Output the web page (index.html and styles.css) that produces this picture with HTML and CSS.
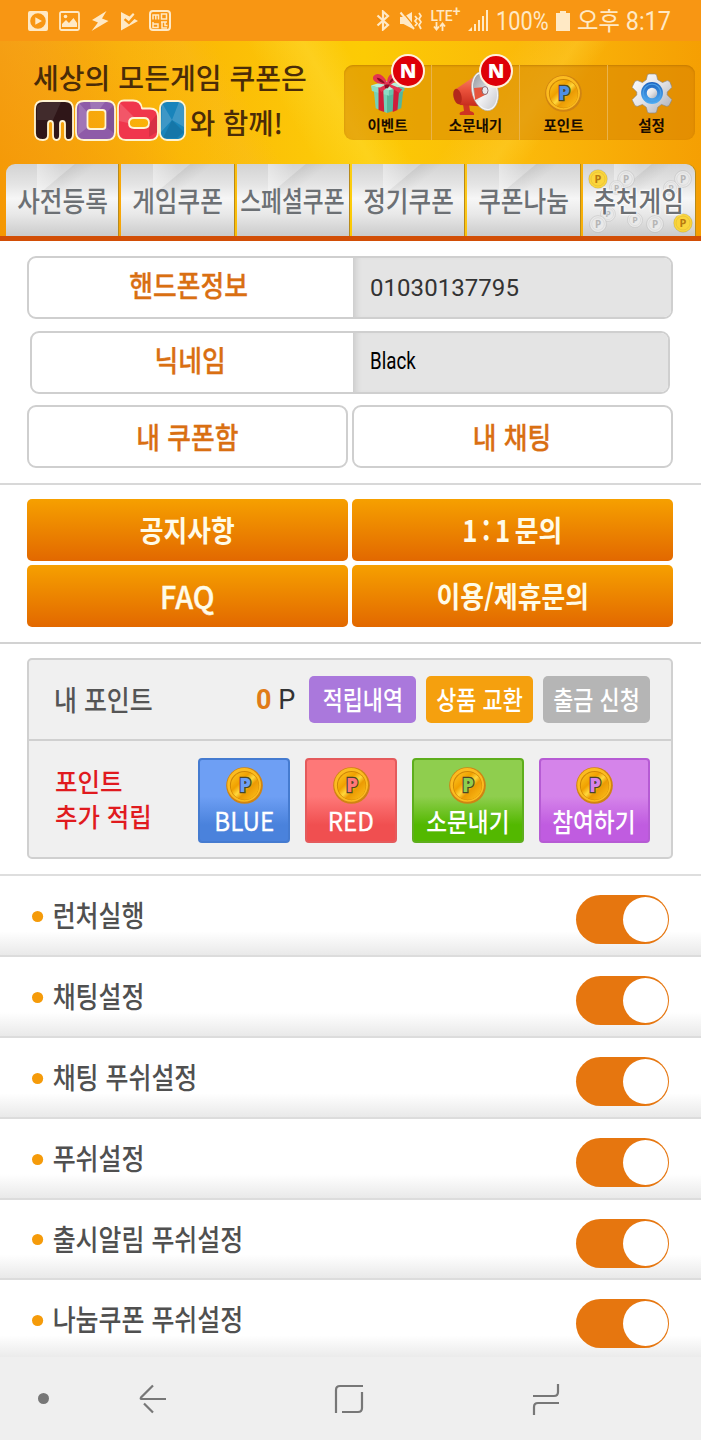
FILE: index.html
```html
<!DOCTYPE html>
<html lang="ko">
<head>
<meta charset="utf-8">
<title>mobi</title>
<link rel="stylesheet" href="styles.css">
</head>
<body>
<svg class="defs" width="0" height="0" aria-hidden="true">
  <defs>
    <linearGradient id="gold" x1="0" y1="0" x2="1" y2="1">
      <stop offset="0" stop-color="#ffcb25"/><stop offset=".35" stop-color="#f0a000"/><stop offset=".5" stop-color="#ffd83c"/><stop offset=".62" stop-color="#eb9a04"/><stop offset="1" stop-color="#ffc31b"/>
    </linearGradient>
    <linearGradient id="silver" x1="0" y1="0" x2="1" y2="1">
      <stop offset="0" stop-color="#fff"/><stop offset=".5" stop-color="#e3e3e6"/><stop offset="1" stop-color="#a9abb3"/>
    </linearGradient>
    <linearGradient id="bell" x1="0" y1="0" x2=".6" y2="1">
      <stop offset="0" stop-color="#8f9299"/><stop offset=".45" stop-color="#c4c6cb"/><stop offset=".6" stop-color="#f2f2f4"/><stop offset="1" stop-color="#d2d3d8"/>
    </linearGradient>
    <linearGradient id="blue" x1="0" y1="0" x2="0" y2="1">
      <stop offset="0" stop-color="#1c62c0"/><stop offset="1" stop-color="#51b0f5"/>
    </linearGradient>
    <linearGradient id="red" x1="0" y1="0" x2="0" y2="1">
      <stop offset="0" stop-color="#fb8a68"/><stop offset=".5" stop-color="#e9503a"/><stop offset="1" stop-color="#c42a1b"/>
    </linearGradient>
    <symbol id="coin" viewBox="0 0 40 40">
      <circle cx="20" cy="20" r="18.800" fill="#d08412"/>
      <circle cx="19.600" cy="19.400" r="17.300" fill="#fcbc20"/>
      <circle cx="20" cy="20" r="15" fill="#cf8606"/>
      <circle cx="20.300" cy="20.400" r="14.300" fill="url(#gold)"/>
      <text class="coin-letter" x="20.500" y="27" text-anchor="middle">P</text>
    </symbol>
    <symbol id="chip" viewBox="0 0 20 20">
      <circle cx="10" cy="10" r="9.300" fill="currentColor" stroke="#0002" stroke-width=".8"/>
      <circle cx="10" cy="10" r="7" fill="none" stroke="#0001"/>
      <text class="chip-letter" x="10" y="14" text-anchor="middle">P</text>
    </symbol>
  </defs>
</svg>

<div class="status">
  <div class="status-left">
    <svg width="20" height="20" viewBox="0 0 20 20"><path fill-rule="evenodd" fill="currentColor" d="M2 0h16a2 2 0 0 1 2 2v16a2 2 0 0 1-2 2H2a2 2 0 0 1-2-2V2a2 2 0 0 1 2-2zm8 2.200a7.800 7.800 0 1 0 0 15.600a7.800 7.800 0 0 0 0-15.600zM7.300 6.200 14 10l-6.700 3.800z"/></svg>
    <svg width="21" height="20" viewBox="0 0 21 20"><rect x="1" y="1" width="19" height="18" rx="1.500" fill="none" stroke="currentColor" stroke-width="1.800"/><path fill="currentColor" d="M3 16v-3l4-4 3 3 4.500-5L18 12v4z"/><circle cx="6.500" cy="5.500" r="1.800" fill="currentColor"/></svg>
    <svg width="18" height="20" viewBox="0 0 18 20"><path fill="currentColor" d="M15.500 0 1 9l6 2.500L.5 20 17.500 10 11 7.500z"/></svg>
    <svg width="18" height="20" viewBox="0 0 18 20"><path fill="currentColor" d="M1 1v18.500L18 10 14.500 8 9 13.500 3.800 9l1.500-1.700 3.500 3L14.500 3.500 13 2 9.500 5.500z"/></svg>
    <svg width="22" height="21" viewBox="0 0 22 21"><rect x="1" y="1" width="20" height="19" rx="3" fill="none" stroke="currentColor" stroke-width="2"/><path fill="none" stroke="currentColor" stroke-width="1.500" d="M4 9.500V5h5.500v4.500M6.800 5v4.500M12.500 4h5v5h-5zM4 12v5.500h5v-3.500H4M12 12h6M13 12v6h5M16 12v3.500h2.500"/></svg>
  </div>
  <div class="status-right">
    <svg class="bt" width="14" height="21" viewBox="0 0 14 21"><path fill="none" stroke="currentColor" stroke-width="2.200" d="M1.500 5.500 12 15l-5 4.500v-18L12 6 1.500 15.500"/></svg>
    <svg class="mute" width="23" height="20" viewBox="0 0 23 20"><path fill="currentColor" d="M1 6h3.500L13 1v16.500L4.500 13H1z"/><path stroke="#f89613" stroke-width="1.200" d="M3.500 1l14 17"/><path stroke="currentColor" stroke-width="2" d="M1.500 1.500 15 18"/><path fill="none" stroke="currentColor" stroke-width="1.800" d="M16 5l2 2.500-2 2.500 2 2.500-2 2.500M20 2l2 3-2 3 2 3-2 3 2 4"/></svg>
    <div class="lte"><span class="lte-text">LTE<sup>+</sup></span>
      <svg width="13" height="9" viewBox="0 0 13 9"><path fill="none" stroke="currentColor" stroke-width="1.800" d="M3.500 0v7M1 4.500 3.500 7.500 6 4.500M9.500 9V1.500M7 4.500l2.500-3 2.500 3"/></svg></div>
    <svg class="signal" width="21" height="21" viewBox="0 0 21 21"><path fill="currentColor" d="M0 21l4-4v4zM6 14h2v7H6zM10 10h2v11h-2zM14 6h2v15h-2zM18 0h2v21h-2z"/></svg>
    <span class="percent">100%</span>
    <svg class="battery" width="14" height="20" viewBox="0 0 14 20"><path fill="currentColor" d="M4 0h6v2h4v18H0V2h4z"/></svg>
    <span class="clock">오후 8:17</span>
  </div>
</div>

<header class="header">
  <div class="top">
    <div class="brand">
      <div class="slogan">세상의 모든게임 쿠폰은</div>
      <div class="brand-row">
        <svg width="154" height="44" viewBox="0 0 154 44">
          <g stroke="#fff4d2" stroke-width="1.800" stroke-linejoin="round">
            <path fill="#2f1618" d="M10 2h22q8 0 8 8v25q0 6-4.200 6T32 36V25q0-3-2.500-3T27 25v11q0 5-3.500 5T20 36V25q0-3-2.500-3T15 25v11q0 5-5 5-8 0-8-7V10q0-8 8-8z"/>
            <path fill="#8e5ba8" fill-rule="evenodd" d="M51 2h23q8 0 8 8v23q0 8-8 8H51q-8 0-8-8V10q0-8 8-8zm6.500 9q-3 0-3 3v13q0 3 3 3h12q3 0 3-3V14q0-3-3-3z"/>
            <path fill="#f0364c" fill-rule="evenodd" d="M91 1.500h9q8 0 9 8h8q8 0 8 8V33q0 8-8 8H93q-8 0-8-8V8.500q0-7 6-7zM101 19q-5 0-5 5t5 5h10q5 0 5-5t-5-5z"/>
            <rect x="127" y="2" width="25" height="39" rx="7" fill="#1884bb"/>
          </g>
          <path fill="#fff" opacity=".16" d="M46 4l9 10v14l-10 8zM57 3h15l-6 8h-8zM87 4l14 14-6 6-9-2zM129 4l10 17-11 12zM146 3q5 1 5 7v18l-12-7z"/>
          <path fill="#fff" opacity=".09" d="M4 7l6-4h18l-8 18H4z"/>
          <path fill="#000" opacity=".1" d="M73 14l8-8v28l-8-6zM116 25l8-10v18l-8 5zM139 21l12 12-7 6h-14z"/>
        </svg>
        <span class="slogan">와 함께!</span>
      </div>
    </div>
    <nav class="menu">
      <div class="menu-item">
        <svg width="36" height="42" viewBox="0 0 38 42"><path fill="#74d0b8" d="M4 18l14 5v19L6 37z"/><path fill="#55b59d" d="M18 23l17-4-2 18-15 5z"/><path fill="#b5efdc" d="M1 13l17-5 19 5-17 6z"/><path fill="#8adcc6" d="M1 13l19 5v6L2 19z"/><path fill="#65c4ab" d="M20 18l17-5-1 6-16 5z"/><path fill="#d01c3a" d="M9 15l5 2 1 24-6-2zM25 17l6-2-2 24-5 2z"/><path fill="#e33350" d="M17 12C1 12 0 2 8 1q6 0 10 9C19-2 28-1 29 4q0 4-7 8l12 5-3 4-11-7-8 6-3-4z"/><path fill="#8f0b24" d="M7 5q5 0 9 6-7-1-9-6zM26 4q-5 2-6 7 5-2 6-7zM15 12h6l-2 4h-3z"/></svg>
        <span>이벤트</span><b class="badge">N</b>
      </div>
      <div class="menu-item">
        <svg width="48" height="44" viewBox="0 0 48 44"><path fill="#cf3422" d="M11 32h6l1 7q5 1 4 4H8q-2-3 4-4z"/><path fill="url(#red)" d="M4 17 26 2q9 17 11 33-13-1-29-2Q0 26 4 17z"/><ellipse cx="5.500" cy="24.500" rx="4" ry="8" fill="#b3281b" transform="rotate(-12 5.500 24.500)"/><ellipse cx="33" cy="19" rx="13" ry="20" fill="#f7f7f7" stroke="#aaa" stroke-width=".6" transform="rotate(-14 33 19)"/><ellipse cx="33" cy="19" rx="11.500" ry="18.300" fill="url(#bell)" transform="rotate(-14 33 19)"/><path fill="#e6553d" d="M22 16l11-1 2 7-12 6z"/><ellipse cx="33" cy="18.500" rx="3" ry="4" fill="#e9e9ee" stroke="#77565e" stroke-width=".8"/></svg>
        <span class="after-tall">소문내기</span><b class="badge">N</b>
      </div>
      <div class="menu-item">
        <svg class="coin" width="40" height="42" viewBox="0 0 40 42"><use href="#coin" x="0" y="2" width="39" height="39"/></svg>
        <span>포인트</span>
      </div>
      <div class="menu-item">
        <svg width="40" height="42" viewBox="0 0 42 42"><path fill="url(#silver)" stroke="#8b8781" stroke-width=".7" stroke-linejoin="round" d="M18 1h6q2 0 2 2l1 4 5 3 5-2q2 0 3 2l2 5-5 5v3l5 5-3 6q-1 1-3 1l-5-2-4 3-1 4q0 2-2 2h-6q-2 0-2-2l-1-4-4-3-5 2q-2 0-3-1l-3-6 5-5v-3l-5-5 3-6q1-1 3-1l5 2 4-3 1-4q0-2 2-2z"/><circle cx="21" cy="21" r="11.500" fill="url(#blue)"/><circle cx="21" cy="21" r="9.300" fill="none" stroke="#4a9fe6" stroke-width="1.500"/><circle cx="21" cy="21" r="5.500" fill="url(#silver)"/></svg>
        <span>설정</span>
      </div>
    </nav>
  </div>
  <nav class="tabs">
    <div class="tab"><span>사전등록</span></div>
    <div class="tab"><span>게임쿠폰</span></div>
    <div class="tab"><span class="tight">스페셜쿠폰</span></div>
    <div class="tab"><span>정기쿠폰</span></div>
    <div class="tab"><span>쿠폰나눔</span></div>
    <div class="tab tab-coins">
      <svg class="chips" width="113" height="72" viewBox="0 0 113 72">
        <g class="chip-gray"><use href="#chip" x="34" y="6" width="18" height="18"/><use href="#chip" x="91" y="6" width="18" height="18"/><use href="#chip" x="80" y="16" width="16" height="16"/><use href="#chip" x="26" y="16" width="15" height="15"/><use href="#chip" x="17" y="42" width="16" height="16"/><use href="#chip" x="6" y="51" width="18" height="18"/><use href="#chip" x="44" y="48" width="16" height="16"/><use href="#chip" x="63" y="51" width="18" height="18"/></g>
        <g class="chip-gold"><use href="#chip" x="5" y="5" width="20" height="20"/><use href="#chip" x="90" y="49" width="20" height="20"/></g>
      </svg>
      <span>추천게임</span>
    </div>
  </nav>
</header>

<main>
  <section class="profile">
    <div class="field"><div class="label"><span>핸드폰정보</span></div><div class="value">01030137795</div></div>
    <div class="field inset"><div class="label"><span>닉네임</span></div><div class="value nick"><span>Black</span></div></div>
    <div class="pair">
      <div class="outline"><span>내 쿠폰함</span></div>
      <div class="outline"><span>내 채팅</span></div>
    </div>
  </section>

  <section class="help">
    <div class="solid"><span>공지사항</span></div>
    <div class="solid inquiry"><span>1 : 1 문의</span></div>
    <div class="solid faq"><span>FAQ</span></div>
    <div class="solid"><span>이용/제휴문의</span></div>
  </section>

  <section class="points">
    <div class="card">
      <div class="balance">
        <span class="balance-name">내 포인트</span>
        <span class="amount"><b>0</b> P</span>
        <div class="pill purple"><span>적립내역</span></div>
        <div class="pill amber"><span>상품 교환</span></div>
        <div class="pill gray"><span>출금 신청</span></div>
      </div>
      <div class="earn">
        <div class="earn-name">포인트<br>추가 적립</div>
        <div class="tile tile-blue"><svg width="39" height="39"><use href="#coin"/></svg><span class="latin">BLUE</span></div>
        <div class="tile tile-red"><svg width="39" height="39"><use href="#coin"/></svg><span class="latin">RED</span></div>
        <div class="tile wide tile-green"><svg width="39" height="39"><use href="#coin"/></svg><span>소문내기</span></div>
        <div class="tile wide tile-violet"><svg width="39" height="39"><use href="#coin"/></svg><span>참여하기</span></div>
      </div>
    </div>
  </section>

  <section class="settings">
    <div class="row"><span>런처실행</span><i class="switch"></i></div>
    <div class="row"><span>채팅설정</span><i class="switch"></i></div>
    <div class="row"><span>채팅 푸쉬설정</span><i class="switch"></i></div>
    <div class="row"><span>푸쉬설정</span><i class="switch"></i></div>
    <div class="row"><span>출시알림 푸쉬설정</span><i class="switch"></i></div>
    <div class="row"><span>나눔쿠폰 푸쉬설정</span><i class="switch"></i></div>
  </section>
</main>

<footer class="navbar">
  <i class="dot"></i>
  <svg class="back" width="28" height="30" viewBox="0 0 28 30"><path d="M14 1.500 2 13.500q-1 1.500 1 1.500h24M5 19.500l9 9"/></svg>
  <svg class="home" width="30" height="30" viewBox="0 0 30 30"><path d="M2 29V6q0-4 4-4h23M28 8v16q0 4-4 4H8"/></svg>
  <svg class="recent" width="28" height="32" viewBox="0 0 28 32"><path d="M26 1v8q0 4-4 4H1M27 20H6q-4 0-4 4v8"/></svg>
</footer>
</body>
</html>
```

FILE: styles.css
```css
* { box-sizing: border-box; }

body {
  margin: 0;
  width: 701px;
  height: 1440px;
  overflow: hidden;
  background: #fff;
  font-family: "Noto Sans CJK KR", sans-serif;
  display: flex;
  flex-direction: column;
}

svg { display: block; flex: none; }
.defs { position: absolute; }
span { white-space: nowrap; }

/* status bar */
.status {
  height: 41px;
  flex: none;
  background: #f89613;
  color: #ffe9c5;
  display: flex;
  justify-content: space-between;
  align-items: center;
  padding: 0 0 0 28px;
}
.status-left { display: flex; gap: 11px; align-items: center; }
.status-right { display: flex; align-items: center; width: 325px; }
.mute { margin-left: 9px; }
.lte { width: 33px; margin-left: 8px; display: flex; flex-direction: column; align-items: center; padding-right: 14px; }
.lte-text { font: 500 14px/12px Roboto, sans-serif; margin-left: 12px; }
.lte-text sup { font-size: 14px; line-height: 0; vertical-align: 5px; }
.signal { margin-left: 5px; }
.percent, .clock { display: inline-block; transform-origin: left center; font-family: Roboto, "Noto Sans CJK KR", sans-serif; font-size: 25px; line-height: 30px; }
.percent { width: 51px; margin-left: 7px; transform: scaleX(.87) translateY(1px); }
.battery { margin-left: 9px; }
.clock { margin-left: 7px; transform: scaleX(.935) translateY(1px); }

/* header */
.header {
  flex: none;
  height: 200px;
  border-bottom: 5px solid #d24e06;
  background:
    linear-gradient(240deg, transparent 60%, #f7b84030 64%, transparent 72%),
    linear-gradient(60deg, #f59700 0%, transparent 28%),
    linear-gradient(240deg, transparent 44%, #ffe04a55 49%, transparent 56%),
    linear-gradient(125deg, transparent 62%, #ffd84055 69%, transparent 73%),
    linear-gradient(90deg, #f5a729 0%, #f8ad10 12%, #fbb905 28%, #fcc808 45%, #fccb04 52%, #fbb90a 75%, #f59f03 100%);
}
.top { height: 123px; display: flex; justify-content: space-between; padding: 0 6px 0 33px; }
.brand { padding-top: 19px; }
.slogan { color: #4a2c08; font-size: 28px; line-height: 34px; font-weight: 500; }
.brand > .slogan { letter-spacing: .05px; }
.brand-row { display: flex; margin-top: 5px; gap: 3px; }
.brand-row .slogan { line-height: 46px; transform: scaleX(.98); transform-origin: left; }
.menu { margin-top: 24px; width: 351px; height: 75px; display: flex; border-radius: 9px; background: #cf7b0075; box-shadow: inset 0 1px 2px #9d600070; }
.menu-item { position: relative; flex: 1; display: flex; flex-direction: column; align-items: center; padding-top: 7px; font-size: 14.500px; line-height: 20px; font-weight: 700; color: #1a0c00; gap: 1px; border-left: 1px solid #eab34b; }
.menu-item:first-child { border-left: 0; }
.after-tall { margin-top: -2px; }
.badge { position: absolute; left: 47px; top: -11px; width: 34px; height: 34px; border-radius: 50%; border: 2px solid #fff1dc; background: #de0008; color: #fff; font: 900 20px/30px "Open Sans", sans-serif; text-align: center; }
.coin-letter { font: 800 19px "Open Sans", sans-serif; fill: var(--letter); stroke: #4c4528; stroke-width: 2.400px; paint-order: stroke; }
.coin { --letter: #4e8fe4; }

.tabs { height: 72px; display: grid; grid-template-columns: repeat(6, minmax(0, 1fr)); column-gap: 3px; margin: 0 6px; }
.tab { position: relative; display: flex; align-items: center; justify-content: center; color: #6c7074; font-size: 28px; font-weight: 500; line-height: 40px;
  box-shadow: 1px 0 0 #b78a1a;
  background:
    linear-gradient(140deg, transparent 46%, #0000000f 47%, transparent 62%) 0 0 / 100% 30px no-repeat,
    linear-gradient(90deg, transparent 28%, #ffffff60 28%, transparent 50%) 0 0 / 100% 30px no-repeat,
    linear-gradient(#d3d3d3, #e4e4e4 28%, #f6f6f6 48%, #e8e8e8 70%, #cbcbcb); }
.tab:first-child { border-top-left-radius: 9px; }
.tab:last-child { border-top-right-radius: 9px; }
.tab span { position: relative; transform: scaleX(.88); }
.tab .tight { transform: scaleX(.81); }
.tab-coins span { text-shadow: 0 0 3px #fff, 0 0 3px #fff, 0 0 2px #fff; }
.chips { position: absolute; left: 0; top: 0; }
.chip-gray { color: #e9e9e9; fill: #b5b5b5; }
.chip-gold { color: #fbd53c; fill: #b97a10; }
.chip-letter { font: 700 11px "Open Sans", sans-serif; }

/* profile */
main { flex: 1; min-height: 0; overflow: hidden; }
.profile { padding: 15px 28px 15px 27px; border-bottom: 2px solid #d8d8d8; height: 244px; }
.field { height: 63px; border: 2px solid #cfcfcf; border-radius: 9px; display: flex; overflow: hidden; margin-bottom: 12px; }
.inset { margin: 0 3px 11px; }
.label { width: 324px; flex: none; }
.inset .label { width: 321px; }
.label, .outline { display: flex; align-items: center; justify-content: center; color: #d96f12; font-size: 29px; line-height: 40px; font-weight: 500; -webkit-text-stroke: .3px; }
.outline span, .solid span { transform: scaleX(.89) translateY(-1px); }
.label span { transform: translate(-2px, -4px) scaleX(.89); }
.value { flex: 1; background: #e4e4e4; box-shadow: inset 7px 0 7px -5px #0002; padding: 1px 0 0 17px; font: 24px/59px Roboto, sans-serif; letter-spacing: .05px; color: #333; }
.nick { color: #000; line-height: 57px; padding-top: 0; }
.nick span { display: inline-block; transform: scaleX(.78); transform-origin: left; }
.pair { display: grid; grid-template-columns: 1fr 1fr; gap: 4px; }
.outline { height: 63px; border: 2px solid #cfcfcf; border-radius: 9px; }

/* help buttons */
.help { height: 159px; padding: 14px 28px 0 27px; border-bottom: 2px solid #d2d2d2; display: grid; grid-template-columns: 1fr 1fr; grid-auto-rows: 62px; gap: 4px; }
.solid { border-radius: 5px; background: linear-gradient(#f6a000, #e26800); display: flex; align-items: center; justify-content: center; color: #fffbe8; font-size: 29px; font-weight: 700; line-height: 40px; }
.inquiry { word-spacing: -3px; }
.faq { font-weight: 500; font-size: 31px; -webkit-text-stroke: .4px; }
.solid.faq span { transform: scaleX(.93); }

/* points */
.points { height: 232px; padding: 14px 28px 0 27px; border-bottom: 2px solid #dedede; }
.card { height: 201px; border: 2px solid #d0d0d0; border-radius: 5px; background: #f0f0f0; }
.balance { height: 81px; border-bottom: 2px solid #d0d0d0; display: flex; align-items: center; padding: 0 21px 0 25px; }
.balance-name { width: 202px; font-size: 28px; line-height: 40px; color: #555; font-weight: 500; transform: scaleX(.89) translateY(-1px); transform-origin: left; }
.amount { width: 53px; font: 27px/40px Roboto, sans-serif; color: #333; }
.amount b { color: #e07b18; }
.pill { width: 107px; height: 47px; border-radius: 5px; display: flex; align-items: center; justify-content: center; color: #fff; font-size: 26px; line-height: 36px; font-weight: 500; margin-left: 10px; }
.pill.purple { margin-left: 0; }
.pill span { transform: scaleX(.84) translateY(-1px); }
.purple { background: #aa78dc; }
.amber { background: #f5a00e; }
.gray { background: #b5b5b5; }
.earn { display: flex; padding: 17px 20px 0 26px; gap: 15px; }
.earn-name { width: 128px; font-size: 26px; line-height: 35px; padding-top: 5px; color: #e01a1e; font-weight: 500; white-space: nowrap; transform: scaleX(.94); transform-origin: left; }
.tile { width: 92px; flex: none; height: 85px; border-radius: 4px; border: 2px solid var(--edge); background: linear-gradient(var(--light) 45%, var(--dark) 80%); display: flex; flex-direction: column; align-items: center; padding-top: 6px; color: #fff; --letter: var(--light); font-size: 26px; line-height: 32px; font-weight: 500; }
.tile span { transform: scaleX(.87); }
.tile .latin { font-weight: 400; transform: scaleX(.93) translateY(-1px); -webkit-text-stroke: .3px; }
.wide { width: 111.500px; }
.tile-blue { --light: #6e9ff4; --dark: #4a82dc; --edge: #457bd0; }
.tile-red { --light: #fe7878; --dark: #f04f50; --edge: #e45a5c; }
.tile-green { --light: #8fce4e; --dark: #53b800; --edge: #5eae1c; }
.tile-violet { --light: #d584ea; --dark: #c05ce0; --edge: #b65bd4; }

/* settings */
.row { height: 81px; display: flex; align-items: flex-start; justify-content: space-between; padding: 19px 32px 0 32px; border-bottom: 2px solid #dcdcdc; background: linear-gradient(#fff 70%, #e9e9e9); font-size: 29px; font-weight: 500; line-height: 42px; color: #505050; }
.row:nth-child(n+4) { height: 80.700px; }
.row span { display: flex; align-items: center; transform: scaleX(.86) translateY(-2px); transform-origin: left; }
.row span::before { content: ""; width: 13px; height: 11px; border-radius: 50%; background: #f59b0a; margin: 4px 11px 0 0; }
.switch { width: 93px; height: 49px; border-radius: 25px; background: #e6760f; display: flex; justify-content: flex-end; padding: 2px 1px 2px 2px; }
.switch::after { content: ""; width: 45px; height: 45px; border-radius: 50%; background: #fff; }

/* navigation bar */
.navbar { height: 83px; flex: none; background: #efefef; display: flex; align-items: center; padding: 0 0 0 38px; }
.navbar path { fill: none; stroke: #777; stroke-width: 2.200; }
.dot { width: 11px; height: 11px; border-radius: 50%; background: #777; }
.back { margin-left: 90px; }
.home { margin-left: 167px; }
.recent { margin-left: 168px; }
```
